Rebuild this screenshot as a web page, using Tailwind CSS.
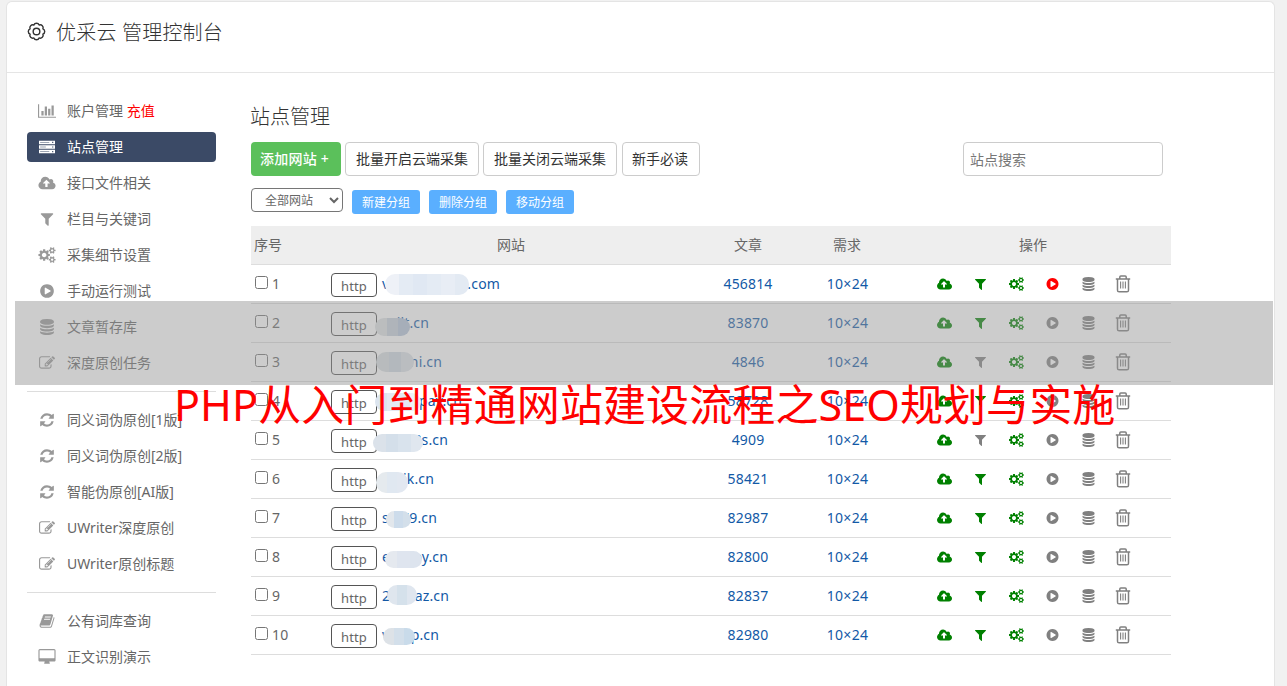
<!DOCTYPE html>
<html lang="zh-CN">
<head>
    <meta charset="UTF-8">
    <meta name="viewport" content="width=device-width, initial-scale=1.0">
    <title>优采云 管理控制台</title>
    <script src="https://cdn.jsdelivr.net/npm/@tailwindcss/browser@4"></script>
</head>
<body class="bg-[#f1f1f1] h-screen overflow-hidden relative font-['Noto_Sans','Noto_Sans_CJK_SC',sans-serif] text-sm text-[#666]">

    <!-- icon set -->
    <svg class="hidden">
        <symbol id="chart" viewBox="0 0 2048 1792"><path d="M640 896v512h-256v-512h256zm384-512v1024h-256v-1024h256zm1024 1152v128h-2048v-1536h128v1408h1920zm-640-896v768h-256v-768h256zm384-384v1152h-256v-1152h256z"/></symbol>
        <symbol id="server" viewBox="0 0 1792 1792"><path fill-rule="evenodd" d="M0 192h1792v384H0zM128 352v64h1024v-64zM1472 320v128h128V320zM0 704h1792v384H0zM128 864v64h640v-64zM1472 832v128h128V832zM0 1216h1792v384H0zM128 1376v64h1024v-64zM1472 1344v128h128v-128z"/></symbol>
        <symbol id="cloud" viewBox="0 0 1920 1792"><path d="M1280 928q0-14-9-23l-352-352q-9-9-23-9t-23 9l-351 351q-10 12-10 24 0 14 9 23t23 9h224v352q0 13 9.5 22.5t22.5 9.5h192q13 0 22.5-9.5t9.5-22.5v-352h224q13 0 22.5-9.5t9.5-22.5zm640 288q0 159-112.5 271.5t-271.5 112.5h-1088q-185 0-316.5-131.5t-131.5-316.5q0-130 70-240t188-165q-2-30-2-43 0-212 150-362t362-150q156 0 285.5 87t188.5 231q71-62 166-62 106 0 181 75t75 181q0 76-41 138 130 31 213.5 135.5t83.5 238.5z"/></symbol>
        <symbol id="filter" viewBox="0 0 1792 1792"><path d="M1595 295q17 41-14 70l-493 493v742q0 42-39 59-13 5-25 5-27 0-45-19l-256-256q-19-19-19-45v-486l-493-493q-31-29-14-70 17-39 59-39h1280q42 0 59 39z"/></symbol>
        <symbol id="cogs" viewBox="0 0 1920 1792"><path d="M896 896q0-106-75-181t-181-75-181 75-75 181 75 181 181 75 181-75 75-181zm768 512q0-52-38-90t-90-38-90 38-38 90q0 53 37.5 90.5t90.5 37.5 90.5-37.5 37.5-90.5zm0-1024q0-52-38-90t-90-38-90 38-38 90q0 53 37.5 90.5t90.5 37.5 90.5-37.5 37.5-90.5zm-384 421v185q0 10-7 19.5t-16 10.5l-155 24q-11 35-32 76 34 48 90 115 7 10 7 20 0 12-7 19-23 30-82.5 89.5t-78.5 59.5q-11 0-21-7l-115-90q-37 19-77 31-11 108-23 155-7 24-30 24h-186q-11 0-20-7.5t-10-17.5l-23-153q-34-10-75-31l-118 89q-7 7-20 7-11 0-21-8-144-133-144-160 0-9 7-19 10-14 41-53t47-61q-23-44-35-82l-152-24q-10-1-17-9.5t-7-19.5v-185q0-10 7-19.5t16-10.5l155-24q11-35 32-76-34-48-90-115-7-11-7-20 0-12 7-20 22-30 82-89t79-59q11 0 21 7l115 90q34-18 77-32 11-108 23-154 7-24 30-24h186q11 0 20 7.5t10 17.5l23 153q34 10 75 31l118-89q8-7 20-7 11 0 21 8 144 133 144 160 0 9-7 19-12 16-42 54t-45 60q23 48 34 82l152 23q10 2 17 10.5t7 19.5zm640 533v140q0 16-149 31-12 27-30 52 51 113 51 138 0 4-4 7-122 71-124 71-8 0-46-47t-52-68q-20 2-30 2t-30-2q-14 21-52 68t-46 47q-2 0-124-71-4-3-4-7 0-25 51-138-18-25-30-52-149-15-149-31v-140q0-16 149-31 13-29 30-52-51-113-51-138 0-4 4-7 4-2 35-20t59-34 30-16q8 0 46 46.5t52 67.5q20-2 30-2t30 2q51-71 92-112l6-2q4 0 124 70 4 3 4 7 0 25-51 138 17 23 30 52 149 15 149 31zm0-1024v140q0 16-149 31-12 27-30 52 51 113 51 138 0 4-4 7-122 71-124 71-8 0-46-47t-52-68q-20 2-30 2t-30-2q-14 21-52 68t-46 47q-2 0-124-71-4-3-4-7 0-25 51-138-18-25-30-52-149-15-149-31v-140q0-16 149-31 13-29 30-52-51-113-51-138 0-4 4-7 4-2 35-20t59-34 30-16q8 0 46 46.5t52 67.5q20-2 30-2t30 2q51-71 92-112l6-2q4 0 124 70 4 3 4 7 0 25-51 138 17 23 30 52 149 15 149 31z"/></symbol>
        <symbol id="play" viewBox="0 0 1792 1792"><path d="M896 128q209 0 385.5 103t279.5 279.5 103 385.5-103 385.5-279.5 279.5-385.5 103-385.5-103-279.5-279.5-103-385.5 103-385.5 279.5-279.5 385.5-103zm384 823q32-18 32-55t-32-55l-544-320q-31-19-64-1-32 19-32 56v640q0 37 32 56 16 8 32 8 17 0 32-9z"/></symbol>
        <symbol id="database" viewBox="0 0 1792 1792"><path d="M896 768q237 0 443-43t325-127v170q0 69-103 128t-280 93.5-385 34.5-385-34.5-280-93.5-103-128v-170q119 84 325 127t443 43zm0 768q237 0 443-43t325-127v170q0 69-103 128t-280 93.5-385 34.5-385-34.5-280-93.5-103-128v-170q119 84 325 127t443 43zm0-384q237 0 443-43t325-127v170q0 69-103 128t-280 93.5-385 34.5-385-34.5-280-93.5-103-128v-170q119 84 325 127t443 43zm0-1152q208 0 385 34.5t280 93.5 103 128v128q0 69-103 128t-280 93.5-385 34.5-385-34.5-280-93.5-103-128v-128q0-69 103-128t280-93.5 385-34.5z"/></symbol>
        <symbol id="edit" viewBox="0 0 1792 1792"><path d="M888 1184l116-116-152-152-116 116v56h96v96h56zm440-720q-16-16-33 1l-350 350q-17 17-1 33t33-1l350-350q17-17 1-33zm80 594v190q0 119-84.5 203.5t-203.5 84.5h-832q-119 0-203.5-84.5t-84.5-203.5v-832q0-119 84.5-203.5t203.5-84.5h832q63 0 117 25 15 7 18 23 3 17-9 29l-49 49q-14 14-32 8-23-6-45-6h-832q-66 0-113 47t-47 113v832q0 66 47 113t113 47h832q66 0 113-47t47-113v-126q0-13 9-22l64-64q15-15 35-7t20 29zm-96-738l288 288-672 672h-288v-288zm444 132l-92 92-288-288 92-92q28-28 68-28t68 28l152 152q28 28 28 68t-28 68z"/></symbol>
        <symbol id="refresh" viewBox="0 0 1792 1792"><path d="M1639 1056q0 5-1 7-64 268-268 434.5t-478 166.5q-146 0-282.5-55t-243.5-157l-129 129q-19 19-45 19t-45-19-19-45v-448q0-26 19-45t45-19h448q26 0 45 19t19 45-19 45l-137 137q71 66 161 102t187 36q134 0 250-65t186-179q11-17 53-117 8-23 30-23h192q13 0 22.5 9.5t9.5 22.5zm25-800v448q0 26-19 45t-45 19h-448q-26 0-45-19t-19-45 19-45l138-138q-148-137-349-137-134 0-250 65t-186 179q-11 17-53 117-8 23-30 23h-199q-13 0-22.5-9.5t-9.5-22.5v-7q65-268 270-434.5t480-166.5q146 0 284 55.5t245 156.5l130-129q19-19 45-19t45 19 19 45z"/></symbol>
        <symbol id="book" viewBox="0 0 1792 1792"><path d="M1703 478q40 57 18 129l-275 906q-19 64-76.5 107.5t-122.5 43.5h-923q-77 0-148.5-53.5t-99.5-131.5q-24-67-2-127 0-4 3-27t4-37q1-8-3-21.5t-3-19.5q2-11 8-21t16.5-23.5 16.5-23.5q23-38 45-91.5t30-91.5q3-10 .5-30t-.5-28q3-11 17-28t17-23q21-36 42-92t25-90q1-9-2.5-32t.5-28q4-13 22-30.5t22-22.5q19-26 42.5-84.5t27.5-96.5q1-8-3-25.5t-2-26.5q2-8 9-18t18-23 17-21q8-12 16.5-30.5t15-35 16-36 19.5-32 26.5-23.5 36-11.5 47.5 5.5l-1 3q38-9 51-9h761q74 0 114 56t18 130l-274 906q-36 119-71.5 153.5t-128.5 34.5h-869q-27 0-38 15-11 16-1 43 24 70 144 70h923q29 0 56-15.5t35-41.5l300-987q7-22 5-57 38 15 59 43zm-1064 2q-4 13 2 22.5t20 9.5h608q13 0 25.5-9.5t16.5-22.5l21-64q4-13-2-22.5t-20-9.5h-608q-13 0-25.5 9.5t-16.5 22.5zm-83 256q-4 13 2 22.5t20 9.5h608q13 0 25.5-9.5t16.5-22.5l21-64q4-13-2-22.5t-20-9.5h-608q-13 0-25.5 9.5t-16.5 22.5z"/></symbol>
        <symbol id="desktop" viewBox="0 0 1920 1792"><path d="M1792 992v-832q0-13-9.5-22.5t-22.5-9.5h-1600q-13 0-22.5 9.5t-9.5 22.5v832q0 13 9.5 22.5t22.5 9.5h1600q13 0 22.5-9.5t9.5-22.5zm128-832v1088q0 66-47 113t-113 47h-544q0 37 16 77.5t32 71 16 43.5q0 26-19 45t-45 19h-512q-26 0-45-19t-19-45q0-14 16-44t32-70 16-78h-544q-66 0-113-47t-47-113v-1088q0-66 47-113t113-47h1600q66 0 113 47t47 113z"/></symbol>
        <symbol id="trash" viewBox="0 0 16 18"><path fill="none" stroke="currentColor" stroke-width="1.5" d="M.8 4h14.4M4.8 3.8V2q0-1 1-1h4.4q1 0 1 1v1.8M2.5 4v11.2q0 1.6 1.6 1.6h7.8q1.6 0 1.6-1.6V4"/><path fill="none" stroke="currentColor" stroke-width="1.1" d="M5.6 6.6v7M8 6.6v7M10.4 6.6v7"/></symbol>
    </svg>

    <div class="absolute left-[6px] top-[1px] bottom-0 w-[1269px] bg-white border border-b-0 border-[#e4e4e4] rounded-t-md">
        <header class="h-[71px] border-b border-[#e5e5e5] flex items-start pl-5 pt-4 text-[#333]">
            <svg class="w-[19px] h-[19px] mt-1" viewBox="0 0 20 20" fill="none" stroke="currentColor" stroke-width="1.5">
                <circle cx="10" cy="10" r="3.5"/>
                <path stroke-linejoin="round" d="M16.74 7.21A3 3 0 0 1 16.74 12.79A3 3 0 0 1 12.79 16.74A3 3 0 0 1 7.21 16.74A3 3 0 0 1 3.26 12.79A3 3 0 0 1 3.26 7.21A3 3 0 0 1 7.21 3.26A3 3 0 0 1 12.79 3.26A3 3 0 0 1 16.74 7.21z"/>
            </svg>
            <h1 class="ml-[10px] text-xl leading-[30px] font-light tracking-[0.2px]">优采云 管理控制台</h1>
        </header>

        <div class="flex pl-5">
            <nav class="w-[189px] pt-[23px]" id="sidebar"></nav>

            <main class="ml-[35px] w-[920px] pt-[29px]">
                <h2 class="-ml-px text-xl leading-[30px] font-light text-[#333]">站点管理</h2>

                <div class="flex mt-[10px] text-[#333]">
                    <button class="w-[90px] h-[34px] pr-[3px] rounded bg-[#5bc05b] text-white font-medium whitespace-nowrap tracking-[0.2px]">添加网站 +</button>
                    <button class="w-[134px] h-[34px] ml-1 rounded border border-[#ccc]">批量开启云端采集</button>
                    <button class="w-[134px] h-[34px] ml-1 rounded border border-[#ccc]">批量关闭云端采集</button>
                    <button class="w-[78px] h-[34px] ml-[5px] pr-[2px] rounded border border-[#ccc]">新手必读</button>
                    <input type="text" placeholder="站点搜索" class="w-[200px] h-[34px] ml-auto mr-2 px-[6px] rounded border border-[#ccc] placeholder:text-[#777]">
                </div>

                <div class="flex mt-3 text-xs text-white">
                    <select class="w-[92px] h-[24px] rounded border border-[#767676] bg-white text-[#666] pl-[9px]">
                        <option>全部网站</option>
                    </select>
                    <button class="w-[68px] h-[24px] mt-[2px] ml-[9px] pt-[2px] rounded-[3px] bg-[#5aafff]">新建分组</button>
                    <button class="w-[68px] h-[24px] mt-[2px] ml-[9px] pt-[2px] rounded-[3px] bg-[#5aafff]">删除分组</button>
                    <button class="w-[68px] h-[24px] mt-[2px] ml-[9px] pt-[2px] rounded-[3px] bg-[#5aafff]">移动分组</button>
                </div>

                <div class="grid grid-cols-[74px_372px_102px_96px_276px] h-[39px] mt-3 items-center text-center bg-[#eee] border-b border-[#ddd]">
                    <div class="text-left pl-[3px]">序号</div>
                    <div>网站</div>
                    <div>文章</div>
                    <div>需求</div>
                    <div>操作</div>
                </div>
                <div id="sites"></div>
            </main>
        </div>
    </div>

    <!-- banner over the page -->
    <div class="absolute left-[15px] top-[301px] w-[1258px] h-[84px] bg-[#949494]/48"></div>
    <div class="absolute left-[174px] top-[375px] text-[43px] leading-[60px] tracking-[0.1px] text-[#f00] whitespace-nowrap">PHP从入门到精通网站建设流程之SEO规划与实施</div>

    <script>
        const menu = [
            ["chart", '账户管理 <span class="text-[#f00]">充值</span>'],
            ["server", "站点管理"],
            ["cloud", "接口文件相关"],
            ["filter", "栏目与关键词"],
            ["cogs", "采集细节设置"],
            ["play", "手动运行测试"],
            ["database", "文章暂存库"],
            ["edit", "深度原创任务"],
            null,
            ["refresh", "同义词伪原创[1版]"],
            ["refresh", "同义词伪原创[2版]"],
            ["refresh", "智能伪原创[AI版]"],
            ["edit", "UWriter深度原创"],
            ["edit", "UWriter原创标题"],
            null,
            ["book", "公有词库查询"],
            ["desktop", "正文识别演示"]
        ];

        document.getElementById("sidebar").innerHTML = menu.map(item => item ? `
            <a class="flex items-center h-[30px] mb-[6px] rounded whitespace-nowrap ${item[0] === "server" ? 'bg-[#3b4a66] text-white' : ''}">
                <span class="w-10 flex justify-center"><svg class="w-[18px] h-4 fill-current ${item[0] === "server" ? 'text-white' : 'text-[#999]'}"><use href="#${item[0]}"/></svg></span>
                <span>${item[1]}</span>
            </a>` : `<hr class="mt-[13px] mb-[13px] border-[#ddd]">`
        ).join("");

        // start / end: visible parts of the domain, width: whole domain
        // mask: x, y, w, h and mosaic colours
        const sites = [
            { start: "v", end: ".com", width: 118, posts: 456814, mask: [3, 9, 84, 21], tiles: ["#eef1f7", "#e4ebf4", "#e0e8f3", "#e4ebf4", "#e8edf5", "#e3eaf3"] },
            { start: "", end: "ilt.cn", width: 47, posts: 83870, mask: [-7, 14, 35, 18], tiles: ["#dfe2e4", "#c8d2dc", "#b7c5da"] },
            { start: "", end: "ni.cn", width: 60, posts: 4846, mask: [-6, 9, 38, 20], tiles: ["#d9dfe2", "#d0d9e2", "#dce2e8"] },
            { start: "", end: "pay.cn", width: 80, posts: 58728, mask: [-7, 11, 46, 18], tiles: ["#dce5ef", "#e4e9f2", "#e3e8f2", "#eef1f5"] },
            { start: "", end: "8s.cn", width: 66, posts: 4909, mask: [-9, 13, 50, 18], tiles: ["#dbe2ea", "#d4dfea", "#d9e3ed", "#e0e7ef"] },
            { start: "", end: "ik.cn", width: 52, posts: 58421, mask: [-6, 12, 32, 21], tiles: ["#e5eaee", "#e0e8f1", "#e2e8f1"] },
            { start: "sf", end: "79.cn", width: 55, posts: 82987, mask: [4, 12, 25, 17], tiles: ["#e2e7ec", "#cddceb", "#d3dfea"] },
            { start: "e", end: "py.cn", width: 66, posts: 82800, mask: [3, 13, 37, 17], tiles: ["#e5e9ef", "#dfe5ef", "#dde4ee"] },
            { start: "2", end: "az.cn", width: 67, posts: 82837, mask: [5, 8, 30, 20], tiles: ["#dfe6ee", "#d5e1eb", "#dfe6ef"] },
            { start: "v", end: "p.cn", width: 57, posts: 82980, mask: [1, 12, 32, 17], tiles: ["#dde2e7", "#d3dfea", "#c9dbea"] }
        ];

        document.getElementById("sites").innerHTML = sites.map((site, i) => `
            <div class="grid grid-cols-[74px_372px_102px_96px_276px] h-[39px] items-center text-center border-b border-[#ddd] text-[#1259a6] tracking-[0.15px]">
                <div class="flex items-center pl-1 text-[#666]">
                    <input type="checkbox" class="w-[13px] h-[13px] mr-1 mb-[3px]">${i + 1}
                </div>
                <div class="relative flex items-center h-full pl-[6px]">
                    <span class="w-[46px] h-6 mt-px pt-[2px] rounded border border-[#555] text-[13px] leading-5 text-[#666]">http</span>
                    <span class="relative flex justify-between items-center h-full ml-[5px]" style="width: ${site.width}px">
                        <span>${site.start}</span><span>${site.end}</span>
                        <i class="absolute flex rounded-[10px] overflow-hidden" style="left: ${site.mask[0]}px; top: ${site.mask[1]}px; width: ${site.mask[2]}px; height: ${site.mask[3]}px">
                            ${site.tiles.map(color => `<b class="flex-1" style="background: ${color}"></b>`).join("")}
                        </i>
                    </span>
                </div>
                <div>${site.posts}</div>
                <div class="pl-px tracking-[0.3px]">10×24</div>
                <div class="flex items-center pl-[42px] gap-[21px] text-[#808080]">
                    <svg class="w-[15px] h-[14px] fill-current text-[#008000]"><use href="#cloud"/></svg>
                    <svg class="w-[15px] h-[14px] fill-current ${i === 2 || i === 4 ? 'text-[#808080]' : 'text-[#008000]'}"><use href="#filter"/></svg>
                    <svg class="w-[15px] h-[14px] fill-current text-[#008000]"><use href="#cogs"/></svg>
                    <svg class="w-[15px] h-[14px] fill-current ${i === 0 ? 'text-[#f00]' : 'text-[#808080]'}"><use href="#play"/></svg>
                    <svg class="w-[15px] h-[14px] fill-current"><use href="#database"/></svg>
                    <svg class="w-4 h-[18px] -ml-[2px]"><use href="#trash"/></svg>
                </div>
            </div>`).join("");
    </script>
</body>
</html>
